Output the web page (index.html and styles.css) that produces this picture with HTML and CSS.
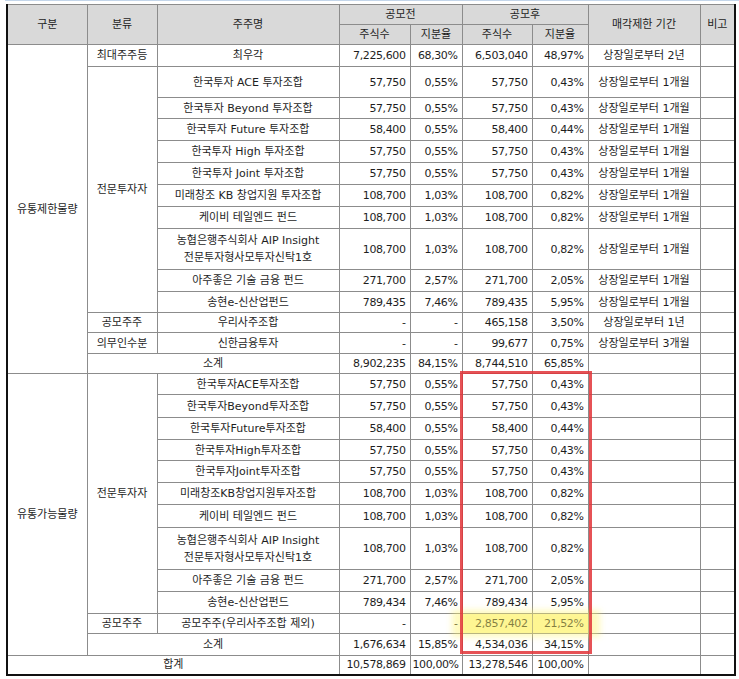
FILE: index.html
```html
<!DOCTYPE html>
<html lang="ko">
<head>
<meta charset="utf-8">
<title>주주별 매각제한 현황</title>
<link rel="stylesheet" href="styles.css">
</head>
<body>
<div class="page">
  <div class="topline"></div>
  <table class="grid">
    <colgroup>
      <col class="w80"><col class="w70"><col class="w182"><col class="w71"><col class="w52"><col class="w70"><col class="w56"><col class="w112"><col class="w35">
    </colgroup>
    <thead>
      <tr class="h20"><th rowspan="2">구분</th><th rowspan="2">분류</th><th rowspan="2">주주명</th><th colspan="2">공모전</th><th colspan="2">공모후</th><th rowspan="2">매각제한 기간</th><th rowspan="2">비고</th></tr>
      <tr class="h20"><th>주식수</th><th>지분율</th><th>주식수</th><th>지분율</th></tr>
    </thead>
    <tbody>
      <tr class="h22"><td rowspan="14">유통제한물량</td><td>최대주주등</td><td>최우각</td><td class="n">7,225,600</td><td class="n">68,30%</td><td class="n">6,503,040</td><td class="n">48,97%</td><td>상장일로부터 2년</td><td></td></tr>
      <tr class="h31"><td rowspan="10">전문투자자</td><td>한국투자 ACE 투자조합</td><td class="n">57,750</td><td class="n">0,55%</td><td class="n">57,750</td><td class="n">0,43%</td><td>상장일로부터 1개월</td><td></td></tr>
      <tr class="h21"><td>한국투자 Beyond 투자조합</td><td class="n">57,750</td><td class="n">0,55%</td><td class="n">57,750</td><td class="n">0,43%</td><td>상장일로부터 1개월</td><td></td></tr>
      <tr class="h22"><td>한국투자 Future 투자조합</td><td class="n">58,400</td><td class="n">0,55%</td><td class="n">58,400</td><td class="n">0,44%</td><td>상장일로부터 1개월</td><td></td></tr>
      <tr class="h22"><td>한국투자 High 투자조합</td><td class="n">57,750</td><td class="n">0,55%</td><td class="n">57,750</td><td class="n">0,43%</td><td>상장일로부터 1개월</td><td></td></tr>
      <tr class="h22"><td>한국투자 Joint 투자조합</td><td class="n">57,750</td><td class="n">0,55%</td><td class="n">57,750</td><td class="n">0,43%</td><td>상장일로부터 1개월</td><td></td></tr>
      <tr class="h22"><td>미래창조 KB 창업지원 투자조합</td><td class="n">108,700</td><td class="n">1,03%</td><td class="n">108,700</td><td class="n">0,82%</td><td>상장일로부터 1개월</td><td></td></tr>
      <tr class="h22"><td>케이비 테일엔드 펀드</td><td class="n">108,700</td><td class="n">1,03%</td><td class="n">108,700</td><td class="n">0,82%</td><td>상장일로부터 1개월</td><td></td></tr>
      <tr class="h41"><td>농협은행주식회사 AIP Insight<br>전문투자형사모투자신탁1호</td><td class="n">108,700</td><td class="n">1,03%</td><td class="n">108,700</td><td class="n">0,82%</td><td>상장일로부터 1개월</td><td></td></tr>
      <tr class="h22"><td>아주좋은 기술 금융 펀드</td><td class="n">271,700</td><td class="n">2,57%</td><td class="n">271,700</td><td class="n">2,05%</td><td>상장일로부터 1개월</td><td></td></tr>
      <tr class="h21"><td>송현e-신산업펀드</td><td class="n">789,435</td><td class="n">7,46%</td><td class="n">789,435</td><td class="n">5,95%</td><td>상장일로부터 1개월</td><td></td></tr>
      <tr class="h20"><td>공모주주</td><td>우리사주조합</td><td class="n">-</td><td class="n">-</td><td class="n">465,158</td><td class="n">3,50%</td><td>상장일로부터 1년</td><td></td></tr>
      <tr class="h21"><td>의무인수분</td><td>신한금융투자</td><td class="n">-</td><td class="n">-</td><td class="n">99,677</td><td class="n">0,75%</td><td>상장일로부터 3개월</td><td></td></tr>
      <tr class="h20"><td colspan="2">소계</td><td class="n">8,902,235</td><td class="n">84,15%</td><td class="n">8,744,510</td><td class="n">65,85%</td><td></td><td></td></tr>

      <tr class="h21"><td rowspan="12">유통가능물량</td><td rowspan="10">전문투자자</td><td>한국투자ACE투자조합</td><td class="n">57,750</td><td class="n">0,55%</td><td class="n">57,750</td><td class="n">0,43%</td><td></td><td></td></tr>
      <tr class="h23"><td>한국투자Beyond투자조합</td><td class="n">57,750</td><td class="n">0,55%</td><td class="n">57,750</td><td class="n">0,43%</td><td></td><td></td></tr>
      <tr class="h22"><td>한국투자Future투자조합</td><td class="n">58,400</td><td class="n">0,55%</td><td class="n">58,400</td><td class="n">0,44%</td><td></td><td></td></tr>
      <tr class="h21"><td>한국투자High투자조합</td><td class="n">57,750</td><td class="n">0,55%</td><td class="n">57,750</td><td class="n">0,43%</td><td></td><td></td></tr>
      <tr class="h22"><td>한국투자Joint투자조합</td><td class="n">57,750</td><td class="n">0,55%</td><td class="n">57,750</td><td class="n">0,43%</td><td></td><td></td></tr>
      <tr class="h22"><td>미래창조KB창업지원투자조합</td><td class="n">108,700</td><td class="n">1,03%</td><td class="n">108,700</td><td class="n">0,82%</td><td></td><td></td></tr>
      <tr class="h23"><td>케이비 테일엔드 펀드</td><td class="n">108,700</td><td class="n">1,03%</td><td class="n">108,700</td><td class="n">0,82%</td><td></td><td></td></tr>
      <tr class="h42"><td>농협은행주식회사 AIP Insight<br>전문투자형사모투자신탁1호</td><td class="n">108,700</td><td class="n">1,03%</td><td class="n">108,700</td><td class="n">0,82%</td><td></td><td></td></tr>
      <tr class="h22"><td>아주좋은 기술 금융 펀드</td><td class="n">271,700</td><td class="n">2,57%</td><td class="n">271,700</td><td class="n">2,05%</td><td></td><td></td></tr>
      <tr class="h22"><td>송현e-신산업펀드</td><td class="n">789,434</td><td class="n">7,46%</td><td class="n">789,434</td><td class="n">5,95%</td><td></td><td></td></tr>
      <tr class="h20"><td>공모주주</td><td>공모주주(우리사주조합 제외)</td><td class="n">-</td><td class="n">-</td><td class="n hl">2,857,402</td><td class="n hl">21,52%</td><td></td><td></td></tr>
      <tr class="h22"><td colspan="2">소계</td><td class="n">1,676,634</td><td class="n">15,85%</td><td class="n">4,534,036</td><td class="n">34,15%</td><td></td><td></td></tr>
      <tr class="h19"><td colspan="3">합계</td><td class="n">10,578,869</td><td class="n">100,00%</td><td class="n">13,278,546</td><td class="n">100,00%</td><td></td><td></td></tr>
    </tbody>
  </table>
  <div class="glow"></div>
  <div class="redbox"></div>
</div>
</body>
</html>
```

FILE: styles.css
```css
html, body {
  margin: 0;
  padding: 0;
  background: #ffffff;
}

.page {
  position: relative;
  width: 739px;
  height: 679px;
  overflow: hidden;
  box-sizing: border-box;
  padding: 4px 0 0 6px;
}

.topline {
  position: absolute;
  left: 5px;
  top: 0;
  width: 734px;
  height: 1px;
  background: #c4d6ea;
}

.grid {
  border-collapse: collapse;
  table-layout: fixed;
  width: 730px;
  font-family: "DejaVu Sans", "Noto Sans CJK KR", sans-serif;
  font-size: 11px;
  line-height: 17px;
  color: #1e1e1e;
  border-top: 1px solid #7a7a7a;
  border-left: 2px solid #111111;
  border-right: 2px solid #111111;
  border-bottom: 2px solid #111111;
}

.w80 { width: 80px; }
.w70 { width: 70px; }
.w182 { width: 182px; }
.w71 { width: 71px; }
.w52 { width: 52px; }
.w56 { width: 56px; }
.w112 { width: 112px; }
.w35 { width: 35px; }

.grid th,
.grid td {
  border: 1px solid #8c8c8c;
  padding: 0 5px;
  text-align: center;
  vertical-align: middle;
  white-space: nowrap;
  overflow: hidden;
  font-weight: normal;
}

.grid th {
  background: #d9d9d9;
}

.grid td.n {
  text-align: right;
  padding: 0 4px 0 2px;
  letter-spacing: -0.4px;
}

.h19 { height: 19px; }
.h20 { height: 20px; }
.h21 { height: 21px; }
.h22 { height: 22px; }
.h23 { height: 23px; }
.h31 { height: 31px; }
.h41 { height: 41px; }
.h42 { height: 42px; }

.grid td.hl {
  background: #fdf8b0;
}

.glow {
  position: absolute;
  left: 452px;
  top: 610px;
  width: 148px;
  height: 27px;
  background: rgba(255, 244, 110, 0.45);
  filter: blur(3px);
}

.redbox {
  position: absolute;
  left: 460px;
  top: 371px;
  width: 132px;
  height: 283px;
  box-sizing: border-box;
  border: 3px solid rgba(226, 52, 56, 0.85);
}
```
